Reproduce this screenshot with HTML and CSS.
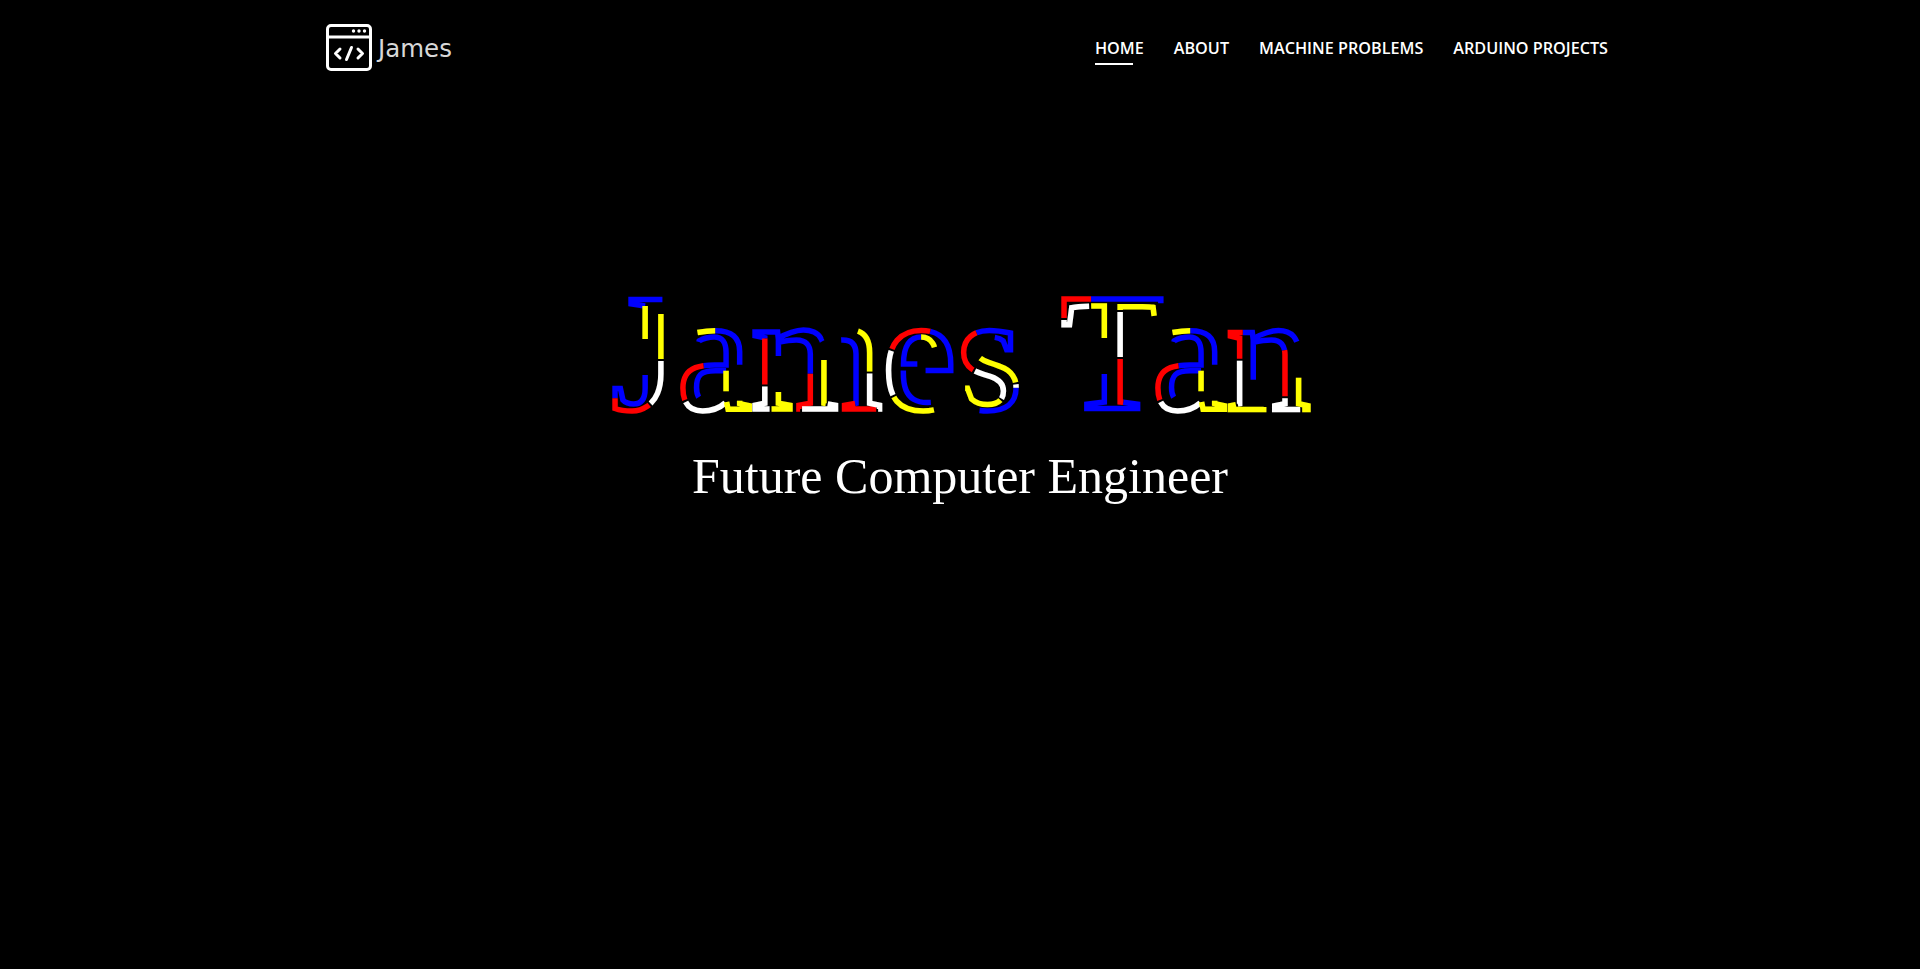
FILE: index.html
```html
<!DOCTYPE html>
<html lang="en">
<head>
<meta charset="utf-8">
<title>James Tan</title>
<link rel="stylesheet" href="styles.css">
</head>
<body>
<header class="header">
  <a class="brand" href="#">
    <svg class="brand-icon" viewBox="0 0 46 47" aria-hidden="true">
      <rect x="1.500" y="1.500" width="43" height="44" rx="3.500" class="icon-line"/>
      <path d="M1.500 13H44.500" class="icon-line"/>
      <circle cx="27.500" cy="7" r="1.700" class="icon-dot"/>
      <circle cx="33" cy="7" r="1.700" class="icon-dot"/>
      <circle cx="38.500" cy="7" r="1.700" class="icon-dot"/>
      <path d="M14 25L9.500 29.500L14 34M32 25L36.500 29.500L32 34M25.500 23.500L20.500 35.500" class="icon-line"/>
    </svg>
    <span class="brand-name">James</span>
  </a>
  <nav class="nav">
    <a class="nav-link active" href="#">HOME</a>
    <a class="nav-link" href="#">ABOUT</a>
    <a class="nav-link" href="#">MACHINE PROBLEMS</a>
    <a class="nav-link" href="#">ARDUINO PROJECTS</a>
  </nav>
</header>
<main class="hero">
  <svg class="title" viewBox="0 0 1920 170" role="img" aria-label="James Tan">
    <text class="stroke s1" x="961" y="149" text-anchor="middle">James Tan</text>
    <text class="stroke s2" x="961" y="149" text-anchor="middle">James Tan</text>
    <text class="stroke s3" x="961" y="149" text-anchor="middle">James Tan</text>
    <text class="stroke s4" x="961" y="149" text-anchor="middle">James Tan</text>
  </svg>
  <p class="subtitle">Future Computer Engineer</p>
</main>
</body>
</html>
```
FILE: styles.css
```css
* { box-sizing: border-box; }
html, body { margin: 0; height: 100%; background: #000; overflow: hidden; }
a { color: inherit; text-decoration: none; }

.header {
  display: flex;
  justify-content: space-between;
  align-items: center;
  height: 96px;
  padding: 0 312px 0 326px;
  color: #fff;
}
.brand { display: flex; align-items: center; gap: 6px; }
.brand-icon { width: 46px; height: 47px; display: block; margin-top: -1px; }
.icon-line { fill: none; stroke: #fff; stroke-width: 3; stroke-linecap: round; stroke-linejoin: round; }
.icon-dot { fill: #fff; }
.brand-name { font: 24.500px/1 "DejaVu Sans", sans-serif; color: #d8d8d8; margin-top: 2px; }

.nav { display: flex; gap: 30px; }
.nav-link {
  position: relative;
  font: 600 16.200px/20px "Open Sans", sans-serif;
  padding: 0 0 7px;
  margin-top: 7px;
}
.nav-link.active::after {
  content: "";
  position: absolute;
  left: 0;
  bottom: 0;
  width: 38px;
  height: 2px;
  background: #fff;
}

.hero { padding-top: 164px; text-align: center; }
.title { display: block; width: 1920px; height: 170px; overflow: visible; }
.stroke {
  font: 168px "Liberation Serif", "Times New Roman", serif;
  fill: none;
  stroke-width: 5.500;
}
.s1 { stroke: #00f; stroke-dasharray: 74 176; stroke-dashoffset: 24; }
.s4 { stroke: #ff0; stroke-dasharray: 45 205; stroke-dashoffset: 164; }
.s3 { stroke: #fff; stroke-dasharray: 45 205; stroke-dashoffset: 117; }
.s2 { stroke: #f00; stroke-dasharray: 46 204; stroke-dashoffset: 70; }
.subtitle {
  margin: 14px 0 0;
  font: 50px/64px "Liberation Serif", "Times New Roman", serif;
  color: #fff;
}
```
